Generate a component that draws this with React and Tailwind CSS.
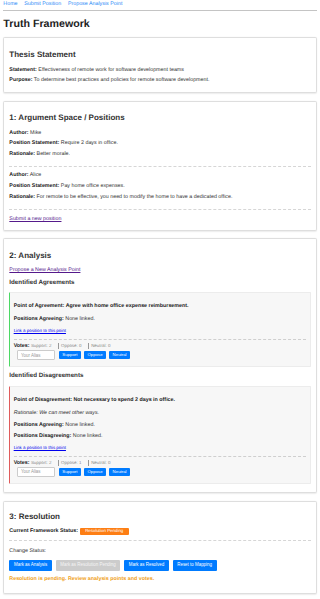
import React from 'react';

const positions = [
  { author: 'Mike', statement: 'Require 2 days in office.', rationale: 'Better morale.' },
  {
    author: 'Alice',
    statement: 'Pay home office expenses.',
    rationale: 'For remote to be effective, you need to modify the home to have a dedicated office.',
  },
];

function Card({ children, className = '' }) {
  return (
    <section
      className={`rounded-[1.67px] border border-[#dedede] bg-white px-[5px] pt-[5.33px] pb-[4.67px] shadow-[0_0.67px_1.33px_rgba(0,0,0,0.08)] ${className}`}
    >
      {children}
    </section>
  );
}

function Label({ children }) {
  return <strong className="font-bold text-[#222]">{children}</strong>;
}

function VoteRow({ support, oppose, neutral }) {
  return (
    <div className="mt-[6px] border-t border-dashed border-[#cfcfcf] pt-[3px]">
      <div className="flex items-baseline leading-[6px]">
        <Label>Votes:</Label>
        <span className="ml-[1.33px] text-[4.44px] text-[#888]">Support: {support}</span>
        <span className="ml-[6.67px] border-l border-[#999] pl-[2px] text-[4.44px] text-[#888]">Oppose: {oppose}</span>
        <span className="ml-[6.67px] border-l border-[#999] pl-[2px] text-[4.44px] text-[#888]">Neutral: {neutral}</span>
      </div>
      <div className="ml-[3px] mt-[0.33px] flex items-center gap-[3.33px]">
        <input
          placeholder="Your Alias"
          className="mr-[0.33px] box-border h-[10.67px] w-[38.67px] rounded-[1px] border border-[#ccc] bg-white p-0 pl-[3.33px] text-[4.44px] leading-[5px] placeholder:text-[#999]"
        />
        {['Support', 'Oppose', 'Neutral'].map((v) => (
          <button key={v} className="h-[7.33px] rounded-[1px] bg-[#007bff] px-[3.33px] text-[4.33px] leading-[7.33px] text-white">
            {v}
          </button>
        ))}
      </div>
    </div>
  );
}

export default function App() {
  return (
    <div className="min-h-screen bg-white px-[3.33px] font-['Liberation_Sans',Arial,sans-serif] text-[5.33px] text-[#333] [text-rendering:geometricPrecision]">
      {/* Nav */}
      <nav className="flex gap-[6.67px] border-b border-[#c4c4c4] pt-[1.33px] pb-[3px] leading-[6px] text-[#2b8af7]">
        <a href="#">Home</a>
        <a href="#">Submit Position</a>
        <a href="#">Propose Analysis Point</a>
      </nav>

      <h1 className="mt-[7px] mb-[6.67px] text-[10.67px] font-bold leading-[12.27px] text-[#222]">Truth Framework</h1>

      {/* Thesis */}
      <Card className="mb-[7.33px]">
        <h2 className="mt-[6.33px] text-[8px] font-bold leading-[9px]">Thesis Statement</h2>
        <p className="mt-[7.67px] leading-[6px]"><Label>Statement:</Label> Effectiveness of remote work for software development teams</p>
        <p className="mt-[4.67px] mb-[4.33px] leading-[6px]"><Label>Purpose:</Label> To determine best practices and policies for remote software development.</p>
      </Card>

      {/* Positions */}
      <Card className="mb-[7.33px]">
        <h2 className="mt-[6.33px] text-[8px] font-bold leading-[9px]">1: Argument Space / Positions</h2>
        <div className="mt-[2px]">
          {positions.map((p) => (
            <div key={p.author} className="flex flex-col gap-[4.67px] border-b border-dashed border-[#d6d6d6] pt-[5.33px] pb-[9.33px] leading-[6px]">
              <p><Label>Author:</Label> {p.author}</p>
              <p><Label>Position Statement:</Label> {p.statement}</p>
              <p><Label>Rationale:</Label> {p.rationale}</p>
            </div>
          ))}
        </div>
        <a href="#" className="mt-[5.67px] mb-[3.67px] block leading-[6px] text-[#551a8b] underline">Submit a new position</a>
      </Card>

      {/* Analysis */}
      <Card className="mb-[7.33px]">
        <h2 className="mt-[6.33px] text-[8px] font-bold leading-[9px]">2: Analysis</h2>
        <a href="#" className="mt-[7.33px] block leading-[6px] text-[#551a8b] underline">Propose a New Analysis Point</a>
        <h3 className="mt-[5.4px] text-[6.24px] font-bold leading-[7.2px]">Identified Agreements</h3>

        <div className="mt-[5.8px] rounded-[1px] border border-l-[1.33px] border-[#ececec] border-l-[#4cd964] bg-[#f7f7f7] pt-[4.67px] pr-[4px] pb-[5.33px] pl-[3.33px]">
          <p className="mt-[5.33px] font-bold leading-[6px] text-[#222]">Point of Agreement: Agree with home office expense reimbursement.</p>
          <p className="mt-[7.67px] leading-[6px]"><Label>Positions Agreeing:</Label> None linked.</p>
          <a href="#" className="mt-[5.67px] block text-[4.44px] leading-[5.33px] text-[#0000ee] underline">Link a position to this point</a>
          <VoteRow support={2} oppose={0} neutral={0} />
        </div>

        <h3 className="mt-[5.67px] text-[6.24px] font-bold leading-[7.2px]">Identified Disagreements</h3>

        <div className="mt-[6.33px] rounded-[1px] border border-l-[1.33px] border-[#ececec] border-l-[#e05b5b] bg-[#f7f7f7] pt-[4.67px] pr-[4px] pb-[5.33px] pl-[3.33px]">
          <p className="mt-[5.67px] font-bold leading-[6px] text-[#222]">Point of Disagreement: Not necessary to spend 2 days in office.</p>
          <p className="mt-[6.67px] italic leading-[6px]">Rationale: We can meet other ways.</p>
          <p className="mt-[5.67px] leading-[6px]"><Label>Positions Agreeing:</Label> None linked.</p>
          <p className="mt-[5.67px] leading-[6px]"><Label>Positions Disagreeing:</Label> None linked.</p>
          <a href="#" className="mt-[5.67px] block text-[4.44px] leading-[5.33px] text-[#0000ee] underline">Link a position to this point</a>
          <VoteRow support={2} oppose={1} neutral={0} />
        </div>
        <div className="h-[4.33px]" />
      </Card>

      {/* Resolution */}
      <Card className="mb-[3px]">
        <h2 className="mt-[5.33px] text-[8px] font-bold leading-[9px]">3: Resolution</h2>
        <div className="mt-[6.67px] flex items-center gap-[1.67px] border-b border-dashed border-[#d6d6d6] pb-[5.33px] leading-[6px]">
          <Label>Current Framework Status:</Label>
          <span className="rounded-[1px] bg-[#fd7e14] px-[5.5px] text-[4.4px] leading-[6.67px] text-white">Resolution Pending</span>
        </div>
        <p className="mt-[7.33px] leading-[6px]">Change Status:</p>
        <div className="mt-[6px] flex gap-[3.67px]">
          <button className="h-[10.67px] rounded-[1px] bg-[#007bff] px-[4.67px] text-[4.44px] text-white">Mark as Analysis</button>
          <button disabled className="h-[10.67px] rounded-[1px] bg-[#cccccc] px-[4.67px] text-[4.44px] text-[#f5f5f5]">Mark as Resolution Pending</button>
          <button className="h-[10.67px] rounded-[1px] bg-[#007bff] px-[4.67px] text-[4.44px] text-white">Mark as Resolved</button>
          <button className="h-[10.67px] rounded-[1px] bg-[#007bff] px-[4.67px] text-[4.44px] text-white">Reset to Mapping</button>
        </div>
        <p className="mt-[5px] mb-[6.33px] font-bold leading-[6px] text-[#f0a020]">Resolution is pending. Review analysis points and votes.</p>
      </Card>
    </div>
  );
}
